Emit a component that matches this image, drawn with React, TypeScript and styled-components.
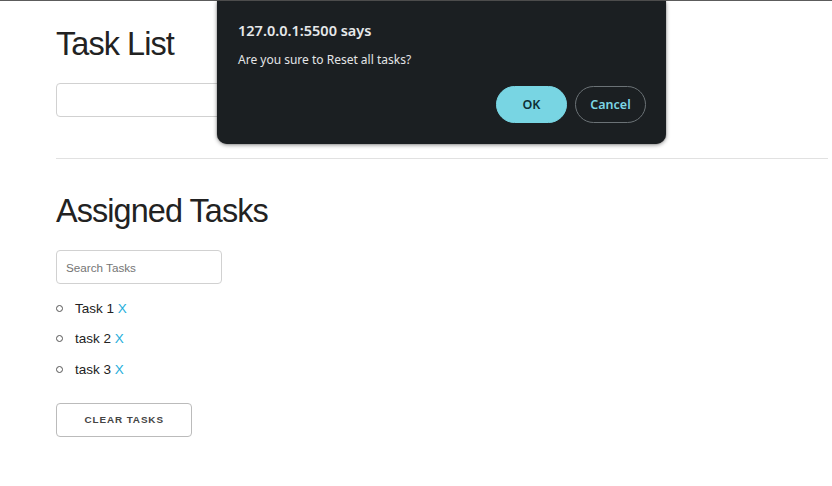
import React from "react";
import styled, { createGlobalStyle } from "styled-components";

const Global = createGlobalStyle`
  html, body { margin: 0; padding: 0; background: #fff; }
  body {
    font-family: "Liberation Sans", Arial, Helvetica, sans-serif;
    color: #222;
    font-size: 13.5px;
    line-height: 1.6;
  }
  * { box-sizing: border-box; }
`;

const Page = styled.div`
  position: relative;
  min-height: 486px;
  border-top: 1px solid #5c5c5c;
  padding: 23px 4px 0 56px;
`;

const Heading = styled.h2<{ $gap?: number }>`
  margin: 0 0 ${(p) => p.$gap ?? 18}px;
  font-size: 32.4px;
  font-weight: 400;
  line-height: 40.5px;
  letter-spacing: -0.9px;
  color: #222;
`;

const TextInput = styled.input<{ $width: number }>`
  display: block;
  width: ${(p) => p.$width}px;
  height: 34px;
  margin: 0 0 13.5px;
  padding: 5px 9px;
  border: 1px solid #d1d1d1;
  border-radius: 4px;
  background: #fff;
  font-family: "Liberation Sans", Arial, sans-serif;
  font-size: 11.7px;
  color: #222;
  outline: none;
  &::placeholder { color: #757575; }
`;

const Rule = styled.hr`
  margin: 41.5px 0 31.5px;
  border: 0;
  border-top: 1px solid #e1e1e1;
`;

const TaskList = styled.ul`
  list-style: none;
  margin: 13.5px 0 22.5px;
  padding: 0;
`;

const TaskItem = styled.li`
  margin: 0 0 9px;
  line-height: 21.6px;
  font-size: 13.5px;
  color: #222;
  &:last-child { margin-bottom: 0; }
  &::before {
    content: "";
    display: inline-block;
    width: 5px;
    height: 5px;
    border: 1px solid #555;
    border-radius: 50%;
    margin-right: 12px;
    vertical-align: 1px;
  }
`;

const RemoveLink = styled.a`
  color: #1eaedb;
  text-decoration: none;
  cursor: pointer;
`;

const ClearButton = styled.button`
  display: inline-block;
  height: 34px;
  padding: 0 27.5px;
  border: 1px solid #bbb;
  border-radius: 4px;
  background: transparent;
  color: #444;
  font-family: "Liberation Sans", Arial, sans-serif;
  font-size: 9.9px;
  font-weight: 700;
  letter-spacing: 0.9px;
  text-transform: uppercase;
  cursor: pointer;
`;

const Dialog = styled.div`
  position: absolute;
  top: 0;
  left: 217px;
  width: 449px;
  height: 143px;
  display: flex;
  flex-direction: column;
  padding: 19px 20px 21px 21px;
  background: #1b1f22;
  border-radius: 0 0 10px 10px;
  box-shadow: 0 1px 4px rgba(0, 0, 0, 0.45), 0 0 1px rgba(0, 0, 0, 0.6);
  font-family: "Noto Sans", "Open Sans", sans-serif;
`;

const DialogTitle = styled.div`
  font-size: 14.5px;
  font-weight: 600;
  line-height: 20px;
  color: #e6e8ea;
`;

const DialogMessage = styled.div`
  margin-top: 11px;
  font-size: 12px;
  line-height: 18px;
  color: #e3e5e7;
`;

const DialogActions = styled.div`
  margin-top: auto;
  display: flex;
  justify-content: flex-end;
  gap: 8px;
`;

const DialogButton = styled.button<{ $primary?: boolean }>`
  width: 71px;
  height: 37px;
  border-radius: 19px;
  border: 1px solid ${(p) => (p.$primary ? "#78d5e3" : "#6b7276")};
  background: ${(p) => (p.$primary ? "#78d5e3" : "transparent")};
  color: ${(p) => (p.$primary ? "#0e2f35" : "#7dd6e6")};
  font-family: "Noto Sans", "Open Sans", sans-serif;
  font-size: 12.5px;
  font-weight: 600;
  cursor: pointer;
`;

const tasks = ["Task 1", "task 2", "task 3"];

export default function App() {
  return (
    <>
      <Global />
      <Page>
        <Heading>Task List</Heading>
        <TextInput $width={400} type="text" />
        <Rule />
        <Heading $gap={19}>Assigned Tasks</Heading>
        <TextInput $width={166} type="text" placeholder="Search Tasks" />
        <TaskList>
          {tasks.map((t) => (
            <TaskItem key={t}>
              {t} <RemoveLink>X</RemoveLink>
            </TaskItem>
          ))}
        </TaskList>
        <ClearButton>Clear Tasks</ClearButton>
        <Dialog>
          <DialogTitle>127.0.0.1:5500 says</DialogTitle>
          <DialogMessage>Are you sure to Reset all tasks?</DialogMessage>
          <DialogActions>
            <DialogButton $primary>OK</DialogButton>
            <DialogButton>Cancel</DialogButton>
          </DialogActions>
        </Dialog>
      </Page>
    </>
  );
}
